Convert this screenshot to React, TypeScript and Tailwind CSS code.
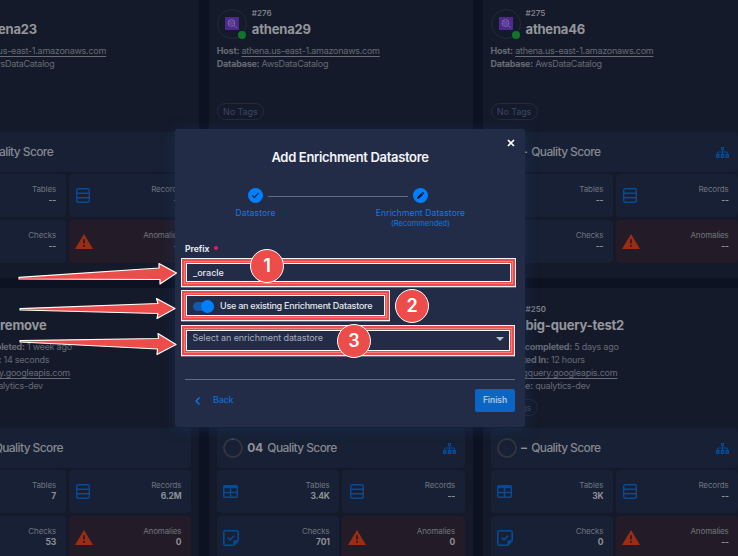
import React from "react";

type Detail = { label: string; value: string; link?: boolean };
type Store = {
  id: string;
  name: string;
  details: Detail[];
  score: string;
  tables: string;
  records: string;
  checks: string;
  anomalies: string;
  lineage: boolean;
};

const athena = (id: string, name: string, lineage: boolean): Store => ({
  id,
  name,
  details: [
    { label: "Host:", value: "athena.us-east-1.amazonaws.com", link: true },
    { label: "Database:", value: "AwsDataCatalog" },
  ],
  score: "–",
  tables: "--",
  records: "--",
  checks: "--",
  anomalies: "--",
  lineage,
});

const bigQuery = (
  id: string,
  name: string,
  synced: string,
  took: string,
  stats: Pick<Store, "score" | "tables" | "records" | "checks" | "anomalies" | "lineage">
): Store => ({
  id,
  name,
  details: [
    { label: "Catalog completed:", value: synced },
    { label: "Completed In:", value: took },
    { label: "Host:", value: "bigquery.googleapis.com", link: true },
    { label: "Database:", value: "qualytics-dev" },
  ],
  ...stats,
});

const stores: Store[] = [
  athena("#277", "athena23", false),
  athena("#276", "athena29", true),
  athena("#275", "athena46", true),
  bigQuery("#252", "bq-remove", "1 week ago", "14 seconds", { score: "04", tables: "7", records: "6.2M", checks: "53", anomalies: "0", lineage: false }),
  bigQuery("#251", "big-query", "5 days ago", "12 hours", { score: "04", tables: "3.4K", records: "--", checks: "701", anomalies: "0", lineage: true }),
  bigQuery("#250", "big-query-test2", "5 days ago", "12 hours", { score: "–", tables: "3K", records: "--", checks: "0", anomalies: "--", lineage: true }),
];

const TableIcon = () => (
  <svg className="h-[13px] w-[15px]" viewBox="0 0 15 13" fill="none" stroke="#064b97" strokeWidth="1.5">
    <rect x="0.75" y="0.75" width="13.5" height="11.5" rx="1" />
    <path d="M1 2h13" strokeWidth="2.4" />
    <path d="M1 7.4h13M7.5 3v9" />
  </svg>
);

const RecordsIcon = () => (
  <svg className="ml-px h-[15px] w-[14px]" viewBox="0 0 14 15" fill="none" stroke="#064b97" strokeWidth="1.4">
    <rect x="0.7" y="0.7" width="12.6" height="13.6" rx="1.5" />
    <path d="M1 5.200h12M1 9.800h12" />
  </svg>
);

const ChecksIcon = () => (
  <svg className="h-4 w-4" viewBox="0 0 16 16" fill="none" stroke="#064b97" strokeWidth="1.6">
    <path d="M10.800 15.200H2.300A1.500 1.500 0 0 1 .8 13.700V2.300A1.500 1.500 0 0 1 2.300 .8h11.400a1.500 1.500 0 0 1 1.500 1.500v8.500z" strokeLinejoin="round" />
    <path d="M10.800 15.200v-4.400h4.400z" fill="#064b97" strokeWidth="0.8" />
    <path d="M4.800 7.600l2.300 2.300 4-4.200" />
  </svg>
);

const WarningIcon = () => (
  <svg className="h-[15px] w-[18px]" viewBox="0 0 18 15">
    <path d="M9 0l9 15H0z" fill="#9c2d14" />
    <path d="M9 5.200v4.200M9 10.900v1.800" stroke="#2a1c26" strokeWidth="1.800" />
  </svg>
);

const SitemapIcon = () => (
  <svg className="h-[11px] w-[13px]" viewBox="0 0 13 11" fill="#064b97">
    <path d="M5 0h3v3H5zM0 7h3.600v4H0zM4.700 7h3.600v4H4.700zM9.400 7H13v4H9.400z" />
    <path d="M6.500 3v4M1.800 7V5h9.400v2" fill="none" stroke="#064b97" />
    <path d="M6 1h1v1H6zM1.300 8.500h1v1h-1zM6 8.500h1v1H6zM10.700 8.500h1v1h-1z" fill="#172034" />
  </svg>
);

function Stat({ icon, label, value, alert }: { icon: React.ReactNode; label: string; value: string; alert?: boolean }) {
  return (
    <div className={`flex h-[43px] items-center justify-between rounded-[4px] pr-[9.500px] ${alert ? "bg-[#231c28] pl-[6px]" : "bg-[#172034] pl-[6.500px]"}`}>
      <span className="flex w-[18px] items-center">{icon}</span>
      <div className="flex flex-col items-end pb-[2px]">
        <span className="text-[8px] leading-[10px] tracking-[-0.120px] text-[#70747f]">{label}</span>
        <span className="text-[8.500px] font-bold leading-[12px] tracking-[-0.200px] text-[#8e9197]">{value}</span>
      </div>
    </div>
  );
}

function StoreCard({ store }: { store: Store }) {
  return (
    <article className="flex h-[286px] flex-col bg-[#141a2a] px-[8px] pt-[17px]">
      <header className="flex h-[30px] gap-[5px]">
        <div className="relative flex size-[30px] shrink-0 items-center justify-center rounded-full border border-[#242a39]">
          <svg className="mb-px size-[14px]" viewBox="0 0 14 14" fill="none">
            <rect width="14" height="13" fill="#4b2a8c" />
            <circle cx="6.500" cy="6" r="3.400" stroke="#8069ad" />
            <path d="M4.500 4.500c1 .8 3 .8 4 0M4.500 6.500c1 .8 3 .8 4 0M9.200 8.600l2.400 2.400" stroke="#8069ad" />
          </svg>
          <span className="absolute -bottom-px right-0 size-[8px] rounded-full bg-[#14732b]" />
        </div>
        <div className="flex flex-col">
          <span className="h-[10px] text-[8px] font-semibold leading-[9px] text-[#7e8188]">{store.id}</span>
          <h2 className="whitespace-nowrap text-[13px] font-bold leading-[20px] tracking-[-0.200px] text-[#94969b]">{store.name}</h2>
        </div>
      </header>
      <div className="mt-[5px] h-[58px] whitespace-nowrap text-[9px] leading-[13px] tracking-[-0.250px] text-[#676b75]">
        {store.details.map((d) => (
          <p key={d.label}>
            <b className="font-bold">{d.label}</b>{" "}
            <span className={d.link ? "underline underline-offset-[1.500px]" : ""}>{d.value}</span>
          </p>
        ))}
      </div>
      <span className="mt-px flex h-[17px] w-[47px] shrink-0 items-center justify-center rounded-full border border-[#242b3c] text-[9px] tracking-[-0.100px] text-[#3d4663]">No Tags</span>
      <div className="mt-[12px] flex h-[40px] items-center rounded-[4px] bg-[#172034] pl-[6px] pr-[9px]">
        <svg className="size-5" viewBox="0 0 20 20" fill="none" strokeWidth="1.800">
          <circle cx="10" cy="10" r="9" stroke="#34363b" />
          {store.score !== "–" && <path d="M8.500 1.100a9 9 0 0 1 2 0" stroke="#075bb5" />}
        </svg>
        <span className="ml-[4.500px] text-[12px] font-bold tracking-[-0.400px] text-[#8e9197]">{store.score}</span>
        <span className="ml-[4.500px] grow text-[12px] font-medium tracking-[-0.600px] text-[#858890]">Quality Score</span>
        {store.lineage && <SitemapIcon />}
      </div>
      <div className="mt-[2px] grid grid-cols-2 gap-x-[3px] gap-y-[3px]">
        <Stat icon={<TableIcon />} label="Tables" value={store.tables} />
        <Stat icon={<RecordsIcon />} label="Records" value={store.records} />
        <Stat icon={<ChecksIcon />} label="Checks" value={store.checks} />
        <Stat icon={<WarningIcon />} label="Anomalies" value={store.anomalies} alert />
      </div>
    </article>
  );
}

function Dialog() {
  return (
    <section className="absolute left-[175px] top-[129px] flex h-[298px] w-[350px] flex-col rounded-[3px] bg-[#222c47] px-[10px] shadow-[0_2px_14px_rgba(28,52,96,0.55)]">
      <div className="flex h-[19px] items-end justify-end">
        <svg className="mb-px size-[8px]" viewBox="0 0 8 8" stroke="#fff" strokeWidth="1.700">
          <path d="M1 1l6 6M7 1L1 7" />
        </svg>
      </div>
      <h1 className="text-center text-[13px] font-semibold leading-[18px] tracking-[-0.330px] text-[#f3f4f7]">Add Enrichment Datastore</h1>
      <div className="mt-[22px] flex h-[40px] justify-center pr-[24px] text-[#087bf0]">
        <div className="flex w-[25px] flex-col items-center">
          <svg className="size-[15px] shrink-0" viewBox="0 0 15 15">
            <circle cx="7.500" cy="7.500" r="7.500" fill="#0080ff" />
            <path d="M4.200 7.300l2.200 2.200 4.200-4.600" fill="none" stroke="#141e36" strokeWidth="1.100" />
          </svg>
          <span className="mt-[4px] whitespace-nowrap text-[8.500px] leading-[12px] tracking-[0.150px]">Datastore</span>
        </div>
        <span className="mt-[8px] h-px w-[140px] bg-[#626b86]" />
        <div className="flex w-[25px] flex-col items-center">
          <svg className="size-[15px] shrink-0" viewBox="0 0 15 15">
            <circle cx="7.500" cy="7.500" r="7.500" fill="#0080ff" />
            <path d="M4 10.900l.4-2 3.900-3.900 1.700 1.700-3.900 3.900zM8.800 4.500l.8-.8 1.700 1.700-.8.800z" fill="#0b1428" />
          </svg>
          <span className="mt-[4px] whitespace-nowrap text-[8.500px] leading-[12px] tracking-[0.130px]">Enrichment Datastore</span>
          <span className="whitespace-nowrap text-[7.500px] leading-[9px]">(Recommended)</span>
        </div>
      </div>
      <div className="mt-[15px] flex h-[12px] items-center text-[8.500px] font-bold text-[#e4e7ee]">
        Prefix <span className="mb-[3px] ml-[4px] size-[4px] rounded-full bg-[#e9195f]" />
      </div>
      <div className="mt-[8px] flex h-[20px] items-center pl-[8px] text-[9px] font-medium text-[#e4e7ee]">_oracle</div>
      <div className="mt-[14px] flex h-[18px] items-center pl-[8px]">
        <span className="flex h-[9px] w-[21px] items-center rounded-full bg-[#1459a8]">
          <span className="ml-auto size-[13px] rounded-full bg-[#0080ff]" />
        </span>
        <span className="ml-[6px] whitespace-nowrap text-[9px] font-medium tracking-[-0.250px] text-[#e4e7ee]">Use an existing Enrichment Datastore</span>
      </div>
      <div className="mt-[14px] flex h-[18px] items-center justify-between pl-[7.500px] pr-[11px]">
        <span className="text-[9px] tracking-[-0.080px] text-[#a9aebd]">Select an enrichment datastore</span>
        <svg className="mt-[2px] h-[4px] w-[8px]" viewBox="0 0 8 4"><path d="M0 0h8L4 4z" fill="#b9bdc9" /></svg>
      </div>
      <div className="mt-[32px] h-px shrink-0 bg-[#626a80]" />
      <div className="mt-[9px] flex h-[23px] items-center justify-between">
        <span className="flex items-center gap-[13px] pb-px pl-[10px] text-[9px] font-medium tracking-[-0.250px] text-[#0a6fd8]">
          <svg className="mt-px h-[8px] w-[5px]" viewBox="0 0 5 8" fill="none" stroke="#0a7cf0" strokeWidth="1.300"><path d="M4.500 .5L1 4l3.500 3.500" /></svg>
          Back
        </span>
        <span className="flex h-[23px] w-[40px] items-center justify-center rounded-[2px] bg-[#0b65c4] text-[8.500px] font-semibold tracking-[-0.050px] text-[#b3c5dd]">Finish</span>
      </div>
    </section>
  );
}

function Frame({ className }: { className: string }) {
  return (
    <div className={`absolute border border-[#eeeff2] shadow-[0_1px_0_rgba(160,165,178,0.5)] ${className}`}>
      <div className="h-full border-2 border-[#ec4d4b]">
        <div className="h-full border border-[#f07f7d]">
          <div className="h-full border border-[#ec4d4b]">
            <div className="h-full border border-white" />
          </div>
        </div>
      </div>
    </div>
  );
}

function Marker({ n, className }: { n: number; className: string }) {
  return (
    <span className={`absolute flex size-[34px] items-center justify-center rounded-full border border-white bg-[#ec4d4b] pb-px text-[18px] font-semibold text-white ${className}`}>
      {n}
    </span>
  );
}

export default function App() {
  return (
    <main className="relative h-[556px] w-[738px] overflow-hidden bg-[#0c1221] font-[Inter,'Noto_Sans',sans-serif]">
      <div className="-ml-[64.800px] -mt-[8px] grid w-[811px] grid-cols-3 gap-[10px]">
        {stores.map((s) => (
          <StoreCard key={s.id} store={s} />
        ))}
      </div>
      <Dialog />
      <Frame className="left-[181px] top-[258px] h-[29px] w-[335px]" />
      <Frame className="left-[181px] top-[290px] h-[31px] w-[209px]" />
      <Frame className="left-[181px] top-[325px] h-[31px] w-[334px]" />
      <svg className="absolute left-0 top-[250px] h-[120px] w-[190px]" viewBox="0 250 190 120" fill="#ec4d4b" stroke="#fff" strokeWidth="1.200" strokeLinejoin="round">
        <path d="M19 277.300L159 268v-4.500L176.500 273 160 284v-4.500L19 279z" />
        <path d="M20 308.600L158 303.500 156.500 298.500 175 308.500 157 318.500 158 313.500 20 310z" />
        <path d="M20 340.600L158.500 338.500 158 333.500 176 344.500 157 354.500 157.500 349 20 342z" />
      </svg>
      <Marker n={1} className="left-[250px] top-[249px]" />
      <Marker n={2} className="left-[395px] top-[288.500px]" />
      <Marker n={3} className="left-[337px] top-[324px]" />
    </main>
  );
}
